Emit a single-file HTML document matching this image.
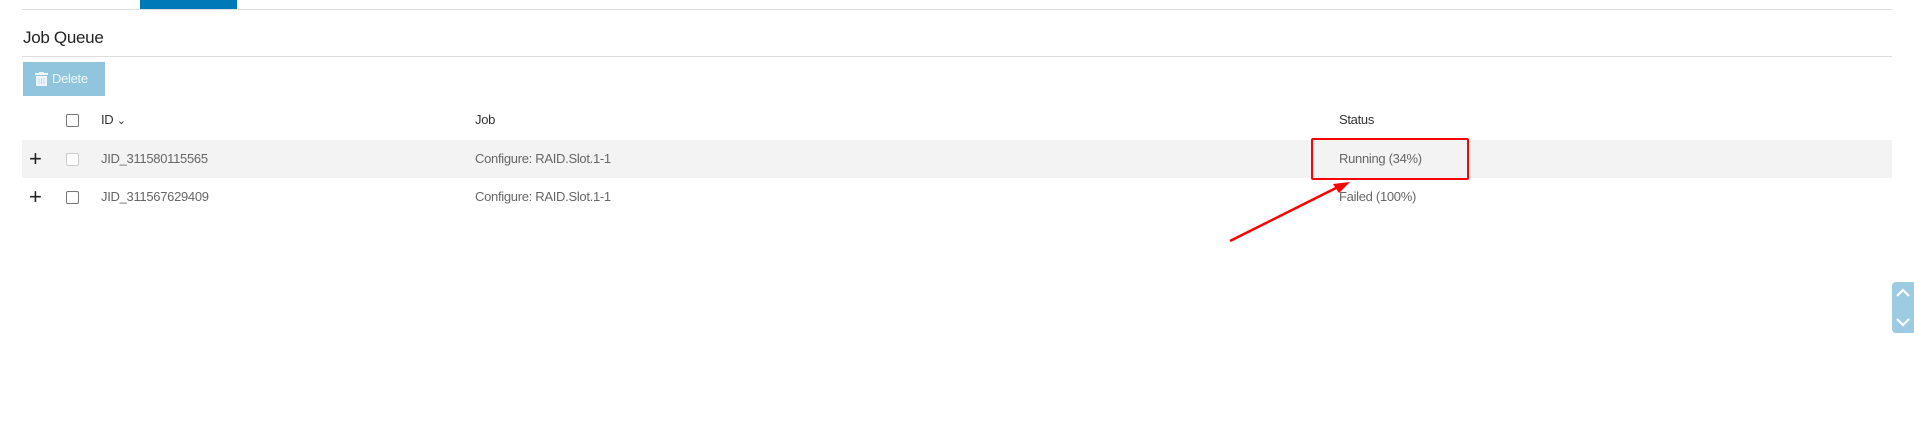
<!DOCTYPE html>
<html><head><meta charset="utf-8"><style>
body{margin:0;width:1914px;height:444px;background:#fff;position:relative;overflow:hidden;font-family:"Liberation Sans",sans-serif;color:#666;font-size:13px;letter-spacing:-0.3px}
.a{position:absolute}
.cb{position:absolute;width:11px;height:11px;border:1px solid #777;border-radius:2px;background:#fff}
.plus{position:absolute;font-size:22px;color:#222;line-height:22px}
</style></head><body>
<div class="a" style="left:22px;top:9px;width:1870px;height:1px;background:#ddd"></div>
<div class="a" style="left:140px;top:0;width:97px;height:9px;background:#0079b8"></div>
<div class="a" style="left:23px;top:28px;font-size:17px;color:#222">Job Queue</div>
<div class="a" style="left:22px;top:56px;width:1870px;height:1px;background:#ddd"></div>
<div class="a" style="left:23px;top:62px;width:82px;height:34px;background:#91c5de;color:#eef6fa;font-size:13px;line-height:34px">
<svg style="position:absolute;left:12px;top:10px" width="13" height="14"><rect x="0" y="1" width="13" height="2" fill="#eef6fa"/><rect x="4" y="0" width="5" height="2" fill="#eef6fa"/><rect x="1" y="4" width="11" height="10" fill="#eef6fa"/><path d="M4 6v6M6.5 6v6M9 6v6" stroke="#b8dcec" stroke-width="1"/></svg>
<span style="position:absolute;left:29px">Delete</span></div>
<div class="cb" style="left:66px;top:114px"></div>
<div class="a" style="left:101px;top:112px;color:#333">ID <span style="font-size:11px">&#8964;</span></div>
<div class="a" style="left:475px;top:112px;color:#333">Job</div>
<div class="a" style="left:1339px;top:112px;color:#333">Status</div>
<div class="a" style="left:22px;top:140px;width:1870px;height:38px;background:#f3f3f3"></div>
<div class="plus" style="left:29px;top:148px">+</div>
<div class="cb" style="left:66px;top:153px;border-color:#ccc"></div>
<div class="a" style="left:101px;top:151px">JID_311580115565</div>
<div class="a" style="left:475px;top:151px">Configure: RAID.Slot.1-1</div>
<div class="a" style="left:1339px;top:151px">Running (34%)</div>
<div class="plus" style="left:29px;top:186px">+</div>
<div class="cb" style="left:66px;top:191px"></div>
<div class="a" style="left:101px;top:189px">JID_311567629409</div>
<div class="a" style="left:475px;top:189px">Configure: RAID.Slot.1-1</div>
<div class="a" style="left:1339px;top:189px">Failed (100%)</div>
<div class="a" style="left:1311px;top:138px;width:154px;height:38px;border:2px solid #f00;border-radius:2px"></div>
<svg class="a" style="left:0;top:0" width="1914" height="444"><line x1="1230" y1="241" x2="1340" y2="186" stroke="#f00" stroke-width="2.5"/><polygon points="1350,182 1333,184 1339,193" fill="#f00"/></svg>
<div class="a" style="left:1892px;top:282px;width:22px;height:51px;background:#9ccbe2;border-radius:4px 0 0 4px"></div>
<svg class="a" style="left:1892px;top:282px" width="22" height="51"><path d="M5 14 L11 8 L17 14 M5 37 L11 43 L17 37" stroke="#fff" stroke-width="2.2" fill="none"/></svg>
</body></html>
